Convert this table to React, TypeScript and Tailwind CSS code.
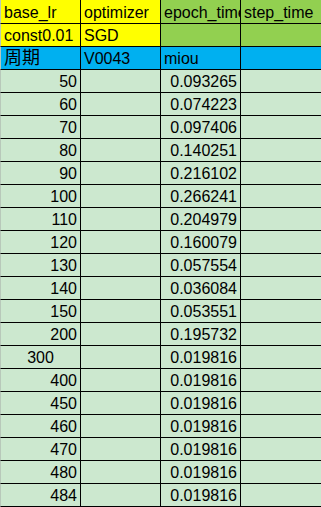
type Cell = {
  text?: string;
  bg: string;
  align?: "left" | "right" | "center";
  big?: boolean;
};

const YELLOW = "bg-[#ffff00]";
const GREEN = "bg-[#92d050]";
const BLUE = "bg-[#00b0f0]";
const PALE = "bg-[#cce8cf]";

const data: [string, string][] = [
  ["50", "0.093265"],
  ["60", "0.074223"],
  ["70", "0.097406"],
  ["80", "0.140251"],
  ["90", "0.216102"],
  ["100", "0.266241"],
  ["110", "0.204979"],
  ["120", "0.160079"],
  ["130", "0.057554"],
  ["140", "0.036084"],
  ["150", "0.053551"],
  ["200", "0.195732"],
  ["300", "0.019816"],
  ["400", "0.019816"],
  ["450", "0.019816"],
  ["460", "0.019816"],
  ["470", "0.019816"],
  ["480", "0.019816"],
  ["484", "0.019816"],
];

const rows: Cell[][] = [
  [
    { text: "base_lr", bg: YELLOW },
    { text: "optimizer", bg: YELLOW },
    { text: "epoch_time", bg: GREEN },
    { text: "step_time", bg: GREEN },
  ],
  [
    { text: "const0.01", bg: YELLOW },
    { text: "SGD", bg: YELLOW },
    { bg: GREEN },
    { bg: GREEN },
  ],
  [
    { text: "周期", bg: BLUE, big: true },
    { text: "V0043", bg: BLUE },
    { text: "miou", bg: BLUE },
    { bg: BLUE },
  ],
  ...data.map(([lr, miou]) => [
    { text: lr, bg: PALE, align: lr === "300" ? ("center" as const) : ("right" as const) },
    { bg: PALE },
    { text: miou, bg: PALE, align: "right" as const },
    { bg: PALE },
  ]),
];

const alignClass = {
  left: "justify-start pl-[3px]",
  right: "justify-end pr-[3px]",
  center: "justify-center",
};

export default function App() {
  return (
    <div
      className="h-[507px] w-[321px] overflow-hidden bg-[#cce8cf] text-[16px] text-black"
      style={{ fontFamily: '"Liberation Sans", Arial, "Noto Sans CJK SC", sans-serif' }}
    >
      <div className="grid grid-cols-[81px_80px_80px_80px]">
        {rows.map((row, r) =>
          row.map((cell, c) => (
            <div
              key={`${r}-${c}`}
              className={`flex items-end overflow-hidden whitespace-nowrap border-b border-black pb-[1px] leading-[18px] ${
                r === 0 ? "h-[24px]" : "h-[23px]"
              } ${c < 3 ? "border-r" : ""} ${c === 0 ? "border-l border-l-[#b8c8ba]" : ""} ${cell.bg} ${
                alignClass[cell.align ?? "left"]
              }`}
            >
              {cell.big ? (
                <span className="text-[18px] leading-[20px]">{cell.text}</span>
              ) : (
                cell.text
              )}
            </div>
          ))
        )}
      </div>
    </div>
  );
}
